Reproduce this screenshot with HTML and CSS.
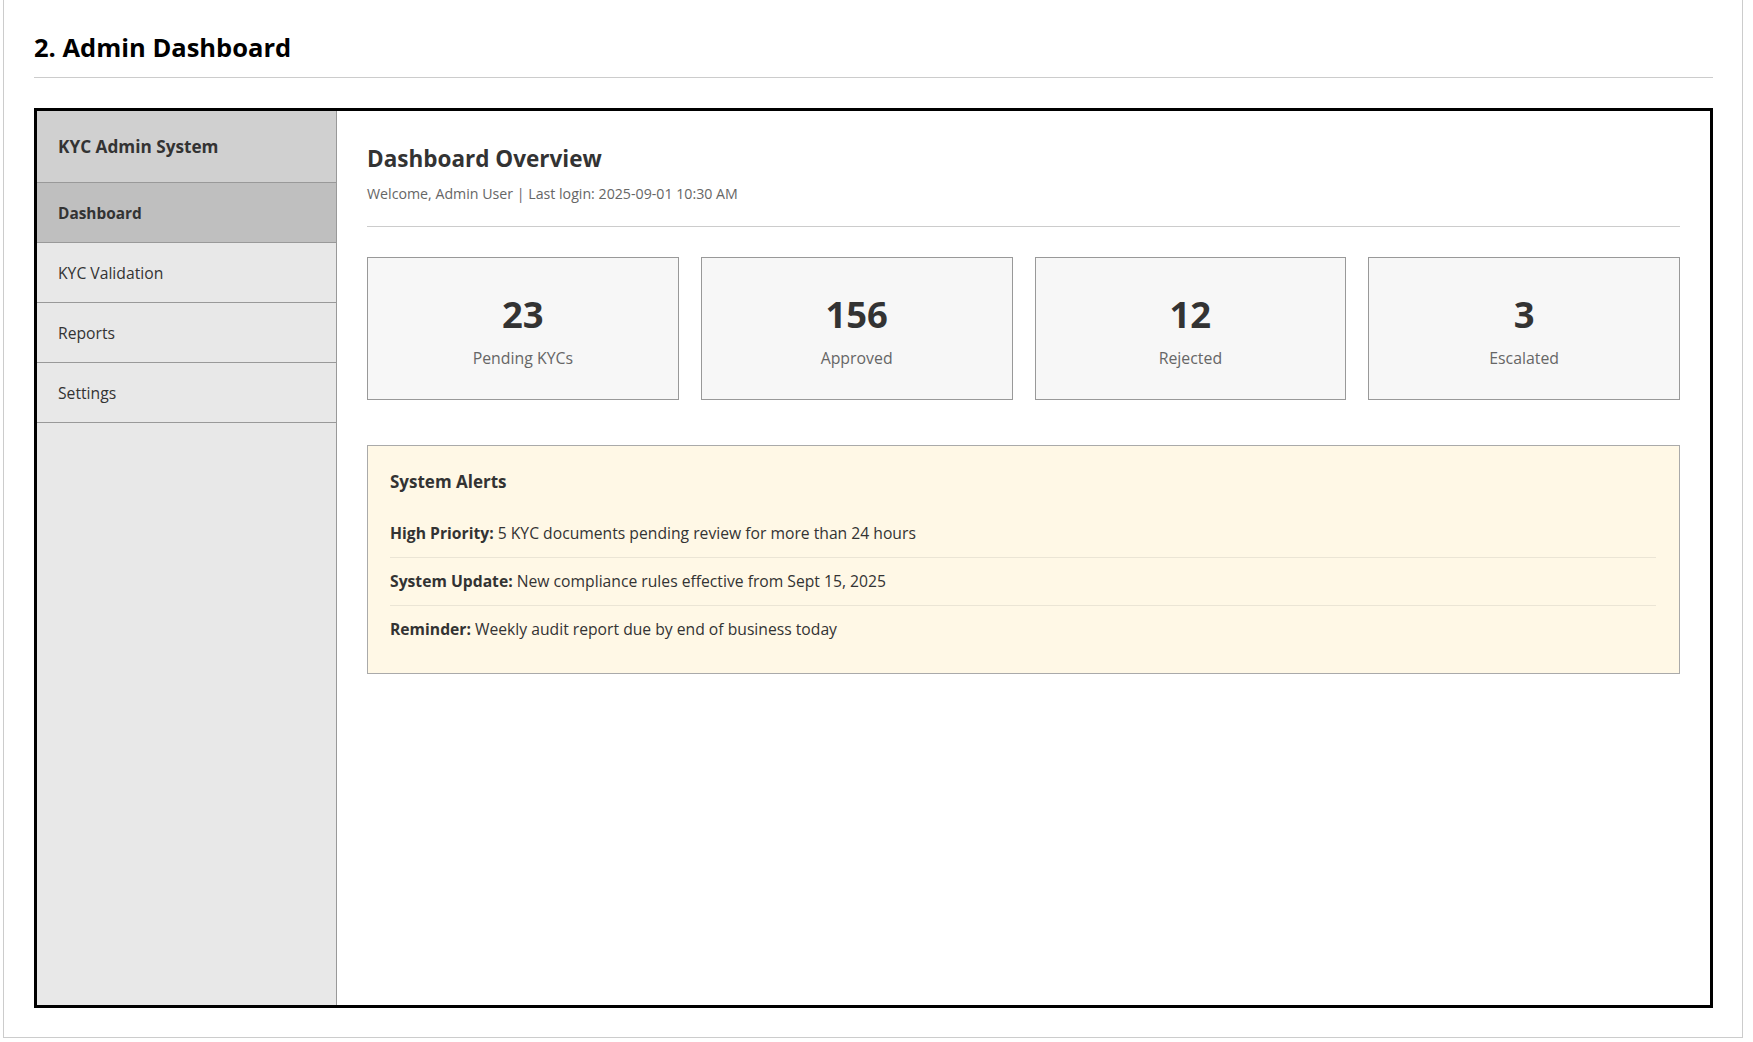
FILE: index.html
```html
<!DOCTYPE html>
<html lang="en">
<head>
<meta charset="utf-8">
<title>Admin Dashboard</title>
<link rel="stylesheet" href="styles.css">
</head>
<body>
<section class="section">
  <h1 class="section-title">2. Admin Dashboard</h1>
  <div class="frame">
    <aside class="sidebar">
      <div class="brand">KYC Admin System</div>
      <nav class="nav">
        <div class="nav-item active">Dashboard</div>
        <div class="nav-item">KYC Validation</div>
        <div class="nav-item">Reports</div>
        <div class="nav-item">Settings</div>
      </nav>
    </aside>
    <main class="main">
      <header class="main-header">
        <h2 class="main-title">Dashboard Overview</h2>
        <p class="welcome">Welcome, Admin User | Last login: 2025-09-01 10:30 AM</p>
      </header>
      <div class="stats">
        <div class="stat"><div class="stat-num">23</div><div class="stat-label">Pending KYCs</div></div>
        <div class="stat"><div class="stat-num">156</div><div class="stat-label">Approved</div></div>
        <div class="stat"><div class="stat-num">12</div><div class="stat-label">Rejected</div></div>
        <div class="stat"><div class="stat-num">3</div><div class="stat-label">Escalated</div></div>
      </div>
      <div class="alerts">
        <h3 class="alerts-title">System Alerts</h3>
        <ul class="alert-list">
          <li><b>High Priority:</b> 5 KYC documents pending review for more than 24 hours</li>
          <li><b>System Update:</b> New compliance rules effective from Sept 15, 2025</li>
          <li><b>Reminder:</b> Weekly audit report due by end of business today</li>
        </ul>
      </div>
    </main>
  </div>
</section>
</body>
</html>
```
FILE: styles.css
```css
* { box-sizing: border-box; }
html, body { margin: 0; padding: 0; background: #fff; }
body {
  font-family: "Open Sans", "Noto Sans", "DejaVu Sans", sans-serif;
  color: #333;
}
.section {
  margin-left: 3px;
  width: 1740px;
  border: 1px solid #ccc;
  border-top: 0;
  padding: 0 29px 29px 30px;
}
.section-title {
  margin: 0;
  padding: 29px 0 12px;
  font-size: 25.5px;
  line-height: 36px;
  font-weight: 700;
  color: #000;
  border-bottom: 1px solid #ccc;
}
.frame {
  margin-top: 30px;
  height: 900px;
  border: 3px solid #000;
  display: flex;
}
.sidebar {
  width: 300px;
  flex: none;
  background: #e8e8e8;
  border-right: 1px solid #999;
}
.brand {
  height: 72px;
  padding: 24px 21px 0;
  font-size: 17.2px;
  line-height: 24px;
  font-weight: 700;
  background: #d0d0d0;
  border-bottom: 1px solid #999;
}
.nav-item {
  height: 60px;
  padding: 18px 21px 0;
  font-size: 15.7px;
  line-height: 25px;
  border-bottom: 1px solid #999;
}
.nav-item.active {
  background: #bfbfbf;
  font-weight: 700;
  font-size: 15.4px;
}
.main {
  flex: 1;
  padding: 30px;
  background: #fff;
}
.main-header {
  padding-bottom: 22px;
  border-bottom: 1px solid #ccc;
}
.main-title {
  margin: 0;
  font-size: 22.5px;
  line-height: 36px;
  font-weight: 700;
  color: #333;
}
.welcome {
  margin: 7px 0 0;
  font-size: 14.2px;
  line-height: 20px;
  color: #666;
}
.stats {
  margin-top: 30px;
  display: grid;
  grid-template-columns: repeat(4, 1fr);
  gap: 22px;
}
.stat {
  height: 143px;
  padding-top: 34px;
  background: #f7f7f7;
  border: 1px solid #999;
  text-align: center;
}
.stat-num {
  font-size: 36.4px;
  line-height: 44px;
  font-weight: 700;
  color: #333;
}
.stat-label {
  margin-top: 11px;
  font-size: 15.85px;
  line-height: 22px;
  color: #666;
}
.alerts {
  margin-top: 45px;
  background: #fff8e6;
  border: 1px solid #aaa;
  padding: 24px 23px 20px 22px;
}
.alerts-title {
  margin: 0 0 16px;
  font-size: 17px;
  line-height: 24px;
  font-weight: 700;
  color: #333;
}
.alert-list {
  list-style: none;
  margin: 0;
  padding: 0;
}
.alert-list li {
  padding: 12px 0;
  font-size: 15.7px;
  line-height: 23px;
  border-bottom: 1px solid #ebe5d5;
}
.alert-list li:last-child { border-bottom: 0; }
.alert-list b { font-weight: 700; }
```
